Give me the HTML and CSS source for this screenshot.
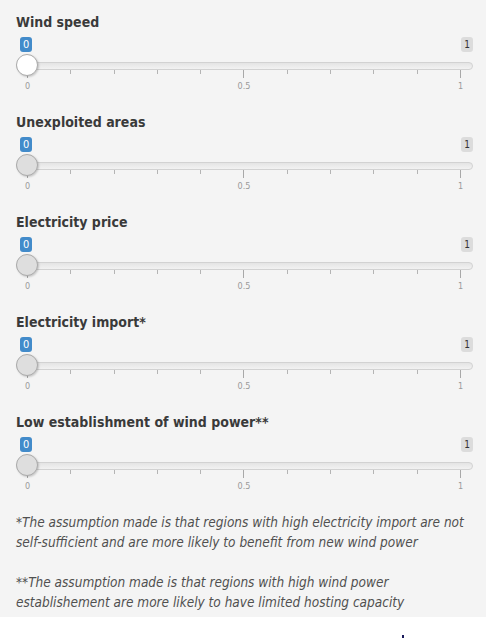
FILE: index.html
```html
<!DOCTYPE html>
<html>
<head>
<meta charset="utf-8">
<title>Sliders</title>
<link rel="stylesheet" href="styles.css">
</head>
<body>
<div class="well">
  <div class="group">
    <div class="label">Wind speed</div>
    <div class="badges"><span class="single">0</span><span class="max">1</span></div>
    <div class="rail"><div class="line"></div><div class="handle active"></div></div>
    <div class="ticks"><i class="big"></i><i></i><i></i><i></i><i></i><i class="big"></i><i></i><i></i><i></i><i></i><i class="big"></i></div>
    <div class="nums"><span>0</span><span>0.5</span><span>1</span></div>
  </div>
  <div class="group">
    <div class="label">Unexploited areas</div>
    <div class="badges"><span class="single">0</span><span class="max">1</span></div>
    <div class="rail"><div class="line"></div><div class="handle"></div></div>
    <div class="ticks"><i class="big"></i><i></i><i></i><i></i><i></i><i class="big"></i><i></i><i></i><i></i><i></i><i class="big"></i></div>
    <div class="nums"><span>0</span><span>0.5</span><span>1</span></div>
  </div>
  <div class="group">
    <div class="label">Electricity price</div>
    <div class="badges"><span class="single">0</span><span class="max">1</span></div>
    <div class="rail"><div class="line"></div><div class="handle"></div></div>
    <div class="ticks"><i class="big"></i><i></i><i></i><i></i><i></i><i class="big"></i><i></i><i></i><i></i><i></i><i class="big"></i></div>
    <div class="nums"><span>0</span><span>0.5</span><span>1</span></div>
  </div>
  <div class="group">
    <div class="label">Electricity import*</div>
    <div class="badges"><span class="single">0</span><span class="max">1</span></div>
    <div class="rail"><div class="line"></div><div class="handle"></div></div>
    <div class="ticks"><i class="big"></i><i></i><i></i><i></i><i></i><i class="big"></i><i></i><i></i><i></i><i></i><i class="big"></i></div>
    <div class="nums"><span>0</span><span>0.5</span><span>1</span></div>
  </div>
  <div class="group">
    <div class="label">Low establishment of wind power**</div>
    <div class="badges"><span class="single">0</span><span class="max">1</span></div>
    <div class="rail"><div class="line"></div><div class="handle"></div></div>
    <div class="ticks"><i class="big"></i><i></i><i></i><i></i><i></i><i class="big"></i><i></i><i></i><i></i><i></i><i class="big"></i></div>
    <div class="nums"><span>0</span><span>0.5</span><span>1</span></div>
  </div>
  <p class="note">*The assumption made is that regions with high electricity import are not self-sufficient and are more likely to benefit from new wind power</p>
  <p class="note">**The assumption made is that regions with high wind power establishement are more likely to have limited hosting capacity</p>
</div>
<div class="below"><span class="dot"></span></div>
</body>
</html>
```
FILE: styles.css
```css
html, body {
  margin: 0;
  padding: 0;
  background: #ffffff;
}
body {
  font-family: "DejaVu Sans Condensed", "DejaVu Sans", sans-serif;
  color: #333333;
}
.well {
  background: #f4f4f4;
  padding: 12px 13px 5px 16px;
}
.group {
  height: 100px;
}
.label {
  font-weight: bold;
  font-size: 14px;
  line-height: 20px;
  color: #3a3a3a;
}
.badges {
  margin-top: 5px;
  height: 15px;
  display: flex;
  justify-content: space-between;
  align-items: flex-start;
}
.single {
  margin-left: 4px;
  background: #428bca;
  color: #ffffff;
  font-size: 11px;
  line-height: 13px;
  padding: 1px 3px;
  border-radius: 3px;
}
.max {
  background: #dcdcdc;
  color: #333333;
  font-size: 10px;
  line-height: 13px;
  padding: 1px 3px;
  border-radius: 3px;
}
.rail {
  position: relative;
  margin-top: 2px;
  height: 16px;
}
.line {
  position: relative;
  top: 8px;
  height: 6px;
  border: 1px solid #d2d2d2;
  border-radius: 8px;
  background: linear-gradient(to bottom, #e4e4e4, #f2f2f2);
}
.handle {
  position: absolute;
  left: 0;
  top: 0;
  width: 20px;
  height: 20px;
  border: 1px solid #ababab;
  border-radius: 50%;
  background: #dedede;
  box-shadow: 1px 1px 2px rgba(0, 0, 0, 0.18);
}
.handle.active {
  background: #ffffff;
}
.ticks {
  height: 8px;
  margin: 0 12px 0 11px;
  display: flex;
  justify-content: space-between;
  align-items: flex-start;
}
.ticks i {
  width: 1px;
  height: 4px;
  background: #b4b4b4;
}
.ticks i.big {
  height: 8px;
  background: #a8a8a8;
}
.nums {
  margin: 3px 12px 0 11px;
  height: 11px;
  display: flex;
  justify-content: space-between;
  font-size: 9px;
  line-height: 11px;
  color: #9a9a9a;
}
.nums span {
  width: 1px;
  display: flex;
  justify-content: center;
}
.note {
  margin: 0 0 20px 0;
  font-style: italic;
  font-size: 13.5px;
  line-height: 20px;
  color: #505050;
}
.note:last-child {
  margin-bottom: 0;
}
.below {
  height: 22px;
  position: relative;
}
.dot {
  position: absolute;
  left: 402px;
  top: 18px;
  width: 2px;
  height: 3px;
  background: #1a1a5a;
}
```
